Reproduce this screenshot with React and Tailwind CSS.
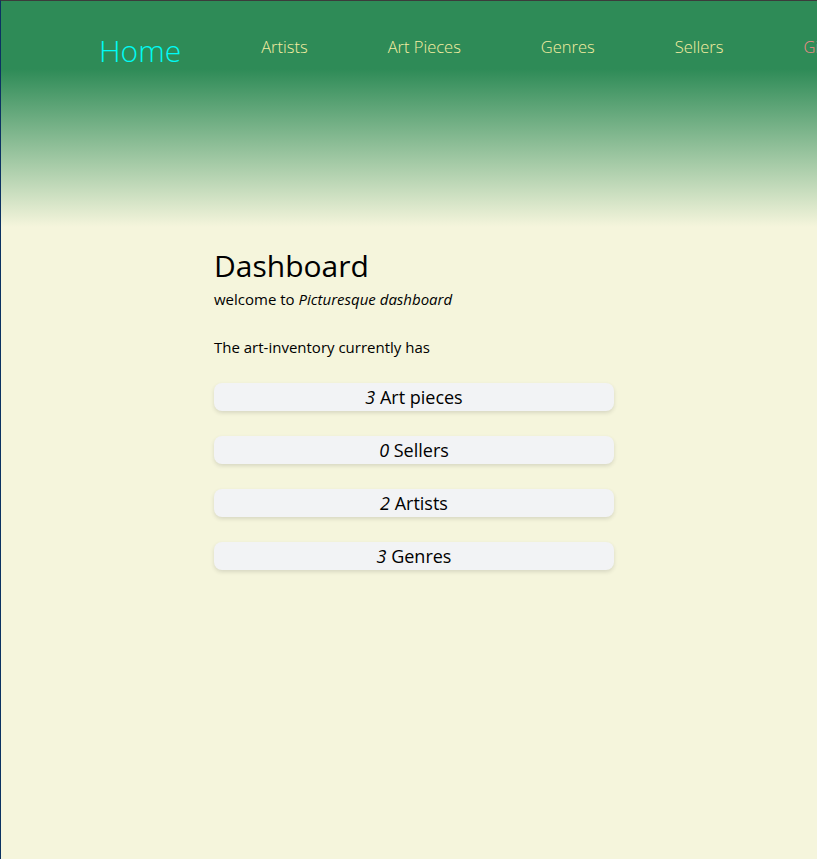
const NAV = [
  { label: 'Artists', color: 'text-[#f6eea2]' },
  { label: 'Art Pieces', color: 'text-[#f6eea2]' },
  { label: 'Genres', color: 'text-[#f6eea2]' },
  { label: 'Sellers', color: 'text-[#f6eea2]' },
  { label: 'Gifts', color: 'text-[#f58a8a]' },
];

const STATS = [
  { count: 3, label: 'Art pieces' },
  { count: 0, label: 'Sellers' },
  { count: 2, label: 'Artists' },
  { count: 3, label: 'Genres' },
];

export default function App() {
  return (
    <div className="min-h-[859px] bg-[#f5f5dc] border-l border-l-[#0b3262] border-t border-t-[#3b3b3b] overflow-hidden font-['Open_Sans','Noto_Sans',sans-serif]">
      {/* Header */}
      <header className="h-[226px] bg-[linear-gradient(to_bottom,#2e8b57_0px,#2e8b57_68px,#f5f5dc_226px)]">
        <nav className="flex items-center gap-[80px] pl-[98px] pt-[32px] whitespace-nowrap font-light">
          <span className="text-[30px] leading-[36px] text-[#00fbf5]">Home</span>
          {NAV.map((n) => (
            <span key={n.label} className={`text-[16.5px] leading-[24px] -mt-[8px] ${n.color}`}>
              {n.label}
            </span>
          ))}
        </nav>
      </header>

      {/* Content */}
      <main className="w-[400px] ml-[213px] pt-[20px] text-black">
        <h1 className="text-[30px] leading-[38px]">Dashboard</h1>
        <p className="text-[15px] leading-[22px] mt-[3px]">
          welcome to <em>Picturesque dashboard</em>
        </p>
        <p className="text-[15px] leading-[22px] mt-[26px]">The art-inventory currently has</p>

        <div className="flex flex-col gap-[25px] mt-[25px]">
          {STATS.map((s) => (
            <div
              key={s.label}
              className="h-[28px] rounded-[8px] bg-[#f2f3f5] shadow-[0_2px_4px_rgba(0,0,0,0.12)] flex items-center justify-center text-[18px]"
            >
              <em>{s.count}</em>&nbsp;{s.label}
            </div>
          ))}
        </div>
      </main>
    </div>
  );
}
